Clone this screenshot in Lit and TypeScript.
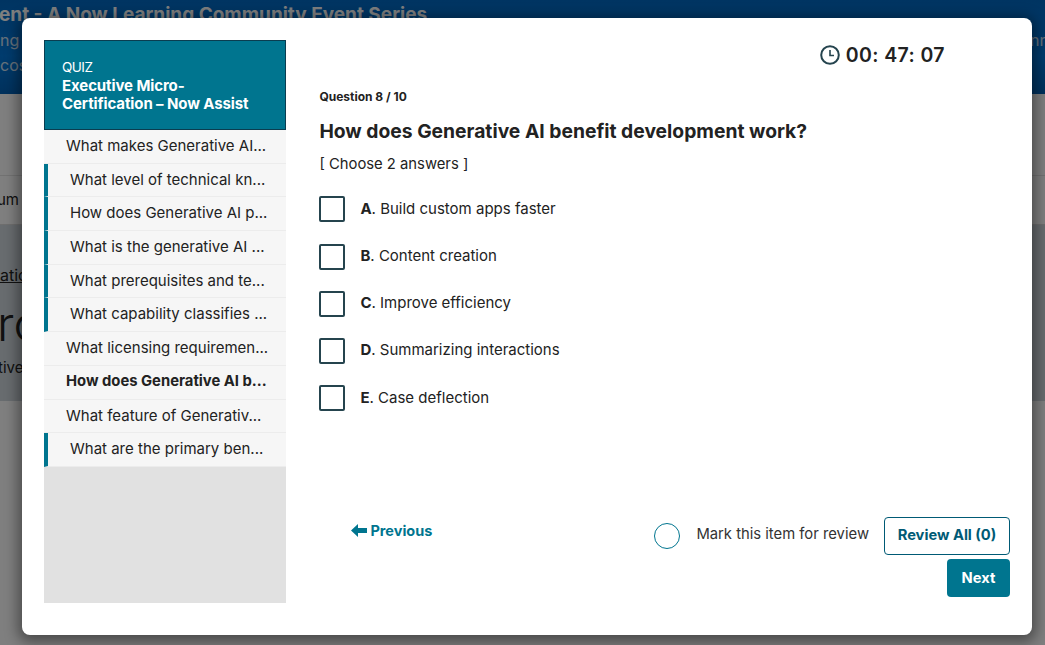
import { LitElement, html, css } from "lit";
import { customElement } from "lit/decorators.js";

const ITEMS: [string, boolean, boolean][] = [
  ["What makes Generative AI...", false, false],
  ["What level of technical kn...", true, false],
  ["How does Generative AI p...", true, false],
  ["What is the generative AI ...", true, false],
  ["What prerequisites and te...", true, false],
  ["What capability classifies ...", true, false],
  ["What licensing requiremen...", false, false],
  ["How does Generative AI b...", false, true],
  ["What feature of Generativ...", false, false],
  ["What are the primary ben...", true, false],
];
const OPTIONS = [
  ["A", "Build custom apps faster"],
  ["B", "Content creation"],
  ["C", "Improve efficiency"],
  ["D", "Summarizing interactions"],
  ["E", "Case deflection"],
];

@customElement("app-root")
export class AppRoot extends LitElement {
  static styles = css`
    :host { display: block; width: 1045px; height: 645px; overflow: hidden; position: relative;
      font-family: Inter, "Liberation Sans", sans-serif; color: #222; background: #fff; }
    .page { height: 645px; display: flex; flex-direction: column; overflow: hidden; }
    .banner { height: 94px; flex: none; background: linear-gradient(#0069c4, #0078dc 60%, #0062b8); color: #fff; overflow: hidden; }
    .banner-title { font-size: 19px; font-weight: 700; line-height: 26px; margin: 2px 0 0 -1px; white-space: nowrap; height: 26px; }
    .banner-line { display: flex; justify-content: space-between; font-size: 16px; line-height: 25px; height: 25px; opacity: .8; }
    .banner-line span:last-child { margin-right: -4px; }
    .nav { height: 82px; flex: none; border-bottom: 1px solid #e4e4e4; box-sizing: border-box; }
    .sub { height: 49px; flex: none; border-bottom: 1px solid #ddd; box-sizing: border-box; padding-top: 15px; font-size: 15px; line-height: 18px; margin-left: -3px; }
    .hero { height: 176px; flex: none; background: #d0d9de; overflow: hidden; }
    .crumb { font-size: 16px; line-height: 18px; text-decoration: underline; padding-top: 41px; }
    .big { font-size: 48px; font-weight: 300; line-height: 54px; margin: 13px 0 0 -3px; }
    .tag { font-size: 15px; line-height: 18px; margin-top: 8px; margin-left: -2px; }
    .overlay { position: absolute; inset: 0; background: rgba(0,0,0,.5); }
    .modal { position: absolute; left: 22px; top: 18px; width: 1010px; height: 617px; background: #fff; border-radius: 8px;
      box-shadow: 0 3px 14px 4px rgba(0,0,0,.42); box-sizing: border-box; padding: 22px 22px 32px; display: flex; }
    .side { width: 242px; flex: none; display: flex; flex-direction: column; background: #e1e1e1; }
    .side-head { height: 90px; box-sizing: border-box; background: #00758f; border: 1px solid #0a3d50; color: #fff; padding: 18px 17px 0; flex: none; }
    .side-kicker { font-size: 13.5px; line-height: 17px; letter-spacing: -.5px; }
    .side-title { font-size: 15px; line-height: 18px; font-weight: 700; letter-spacing: -.1px; margin-top: 1px; }
    .item { height: 33.7px; box-sizing: border-box; background: #f6f6f6; border-bottom: 1px solid #ececec; padding-left: 22px; font-size: 15px; line-height: 31.8px; white-space: nowrap; overflow: hidden; color: #222; }
    .item.done { border-left: 4px solid #00758f; }
    .item.cur { font-weight: 700; font-size: 14.8px; }
    .main { flex: 1; min-width: 0; display: flex; flex-direction: column; padding: 0 0 6px 33.4px; }
    .timer { display: flex; align-items: center; justify-content: flex-end; gap: 6px; padding-right: 65px; height: 30px; font-size: 19.5px; font-weight: 600; color: #222; letter-spacing: .4px; flex: none; }
    .qnum { font-size: 12px; font-weight: 700; line-height: 16px; margin-top: 19px; }
    .qtitle { font-size: 19.3px; font-weight: 700; line-height: 26px; margin-top: 13px; }
    .hint { font-size: 14.8px; line-height: 20px; margin-top: 10px; }
    .opts { display: flex; flex-direction: column; gap: 21.25px; margin-top: 22.4px; }
    .opt { display: flex; align-items: center; gap: 15px; height: 26px; font-size: 15px; }
    .opt span { position: relative; top: -1.4px; }
    .box { width: 26px; height: 26px; box-sizing: border-box; border: 2px solid #25444e; border-radius: 2px; flex: none; }
    .foot { margin-top: auto; display: flex; flex-direction: column; align-items: flex-end; gap: 4px; }
    .foot-row { display: flex; align-items: center; width: 100%; }
    .prev { display: flex; align-items: center; gap: 3px; color: #00758f; font-weight: 700; font-size: 14.5px; margin-left: 32px; position: relative; top: -6px; }
    .mark { margin-left: auto; display: flex; align-items: center; gap: 16px; font-size: 14.8px; color: #333; margin-right: 15px; }
    .mark span { position: relative; top: -2px; }
    .radio { width: 26px; height: 26px; box-sizing: border-box; border: 1px solid #00758f; border-radius: 50%; }
    .btn { display: flex; align-items: center; justify-content: center; box-sizing: border-box; border-radius: 4px; height: 38px; font-size: 14.7px; font-weight: 700; }
    .review { width: 126px; border: 1px solid #005a75; color: #005a75; background: #fff; padding-bottom: 2px; }
    .next { width: 63px; background: #00758f; color: #fff; }
  `;

  render() {
    return html`
      <div class="page">
        <div class="banner">
          <div class="banner-title">ent - A Now Learning Community Event Series</div>
          <div class="banner-line"><span>ng</span><span>nn</span></div>
          <div class="banner-line"><span>cos</span></div>
        </div>
        <div class="nav"></div>
        <div class="sub">um</div>
        <div class="hero">
          <div class="crumb">atio</div>
          <div class="big">rc</div>
          <div class="tag">tive</div>
        </div>
      </div>
      <div class="overlay"></div>
      <div class="modal">
        <div class="side">
          <div class="side-head">
            <div class="side-kicker">QUIZ</div>
            <div class="side-title">Executive Micro-<br />Certification – Now Assist</div>
          </div>
          ${ITEMS.map(([t, done, cur]) => html`<div class="item ${done ? "done" : ""} ${cur ? "cur" : ""}">${t}</div>`)}
        </div>
        <div class="main">
          <div class="timer">
            <svg width="20" height="20" viewBox="0 0 20 20" fill="none" stroke="#25444e" stroke-width="2">
              <circle cx="10" cy="10" r="8.8"></circle>
              <path d="M10 5v5.5h4" stroke-width="1.6"></path>
            </svg>
            <span>00: 47: 07</span>
          </div>
          <div class="qnum">Question 8 / 10</div>
          <div class="qtitle">How does Generative AI benefit development work?</div>
          <div class="hint">[ Choose 2 answers ]</div>
          <div class="opts">
            ${OPTIONS.map(([l, t]) => html`<div class="opt"><div class="box"></div><span><b>${l}</b>. ${t}</span></div>`)}
          </div>
          <div class="foot">
            <div class="foot-row">
              <div class="prev">
                <svg width="16" height="13" viewBox="0 0 16 13" fill="#00758f"><path d="M0 6.5 7 0v4H16v5H7v4z"></path></svg>
                <span>Previous</span>
              </div>
              <div class="mark"><div class="radio"></div><span>Mark this item for review</span></div>
              <div class="btn review">Review All (0)</div>
            </div>
            <div class="btn next">Next</div>
          </div>
        </div>
      </div>
    `;
  }
}
